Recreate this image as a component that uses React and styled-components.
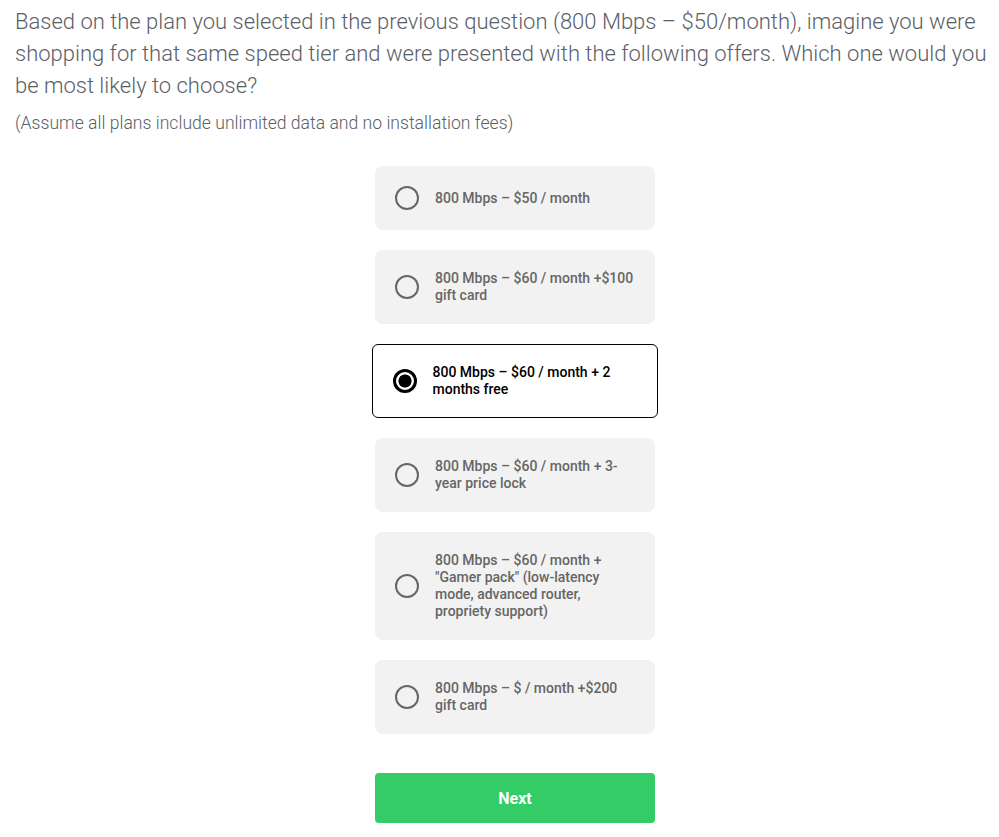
import React, { useState } from 'react';
import styled, { createGlobalStyle } from 'styled-components';

const offers = [
  '800 Mbps – $50 / month',
  '800 Mbps – $60 / month +$100 gift card',
  '800 Mbps – $60 / month + 2 months free',
  '800 Mbps – $60 / month + 3-year price lock',
  '800 Mbps – $60 / month + "Gamer pack" (low-latency mode, advanced router, propriety support)',
  '800 Mbps – $ / month +$200 gift card',
];

const App = () => {
  const [selected, setSelected] = useState(2);

  return (
    <>
      <GlobalStyle />
      <Page>
        <Question>
          Based on the plan you selected in the previous question (800 Mbps – $50/month), imagine you were
          shopping for that same speed tier and were presented with the following offers. Which one would you
          be most likely to choose?
        </Question>
        <Hint>(Assume all plans include unlimited data and no installation fees)</Hint>

        <OptionsArea>
          <Options>
            {offers.map((label, i) => (
              <Option key={i} $active={selected === i} onClick={() => setSelected(i)}>
                <Radio $active={selected === i} />
                <OptionText $active={selected === i}>{label}</OptionText>
              </Option>
            ))}
            <NextButton type="button">Next</NextButton>
          </Options>
        </OptionsArea>
      </Page>
    </>
  );
};

export default App;

const GlobalStyle = createGlobalStyle`
  body {
    margin: 0;
    background: #fff;
    font-family: Roboto, 'Liberation Sans', sans-serif;
  }
`;

const Page = styled.main`
  padding: 6px 10px 0 15px;
`;

const Question = styled.p`
  margin: 0;
  font-size: 22px;
  font-weight: 300;
  line-height: 32px;
  color: #5b6067;
`;

const Hint = styled.p`
  margin: 9px 0 0 0;
  font-size: 17.6px;
  font-weight: 300;
  line-height: 24px;
  color: #5b6067;
`;

const OptionsArea = styled.div`
  padding-left: 26px;
`;

const Options = styled.div`
  width: 280px;
  margin: 31px auto 0 auto;
  display: flex;
  flex-direction: column;
  gap: 20px;
`;

const Option = styled.div`
  display: flex;
  align-items: center;
  gap: 16px;
  min-height: 24px;
  padding: ${p => (p.$active ? '19px 18.5px 19px 19.5px' : '20px')};
  margin: ${p => (p.$active ? '0 -3px' : '0')};
  border-radius: ${p => (p.$active ? '6px' : '8px')};
  background: ${p => (p.$active ? '#fff' : '#f2f2f2')};
  border: ${p => (p.$active ? '1.5px solid #000' : 'none')};
  cursor: pointer;
`;

const Radio = styled.span`
  flex: 0 0 24px;
  width: 24px;
  height: 24px;
  box-sizing: border-box;
  border-radius: 50%;
  border: ${p => (p.$active ? '3px solid #000' : '2px solid #666')};
  background: ${p => (p.$active ? 'radial-gradient(circle, #000 0 6.3px, #fff 6.8px)' : 'transparent')};
`;

const OptionText = styled.span`
  flex: 1;
  font-size: 14px;
  font-weight: 500;
  line-height: 17px;
  color: ${p => (p.$active ? '#000' : '#666')};
`;

const NextButton = styled.button`
  margin-top: 19px;
  height: 50px;
  border: none;
  border-radius: 4px;
  background: #33cc66;
  color: #fff;
  font-family: Roboto, 'Liberation Sans', sans-serif;
  font-size: 16px;
  font-weight: 700;
  cursor: pointer;
`;
